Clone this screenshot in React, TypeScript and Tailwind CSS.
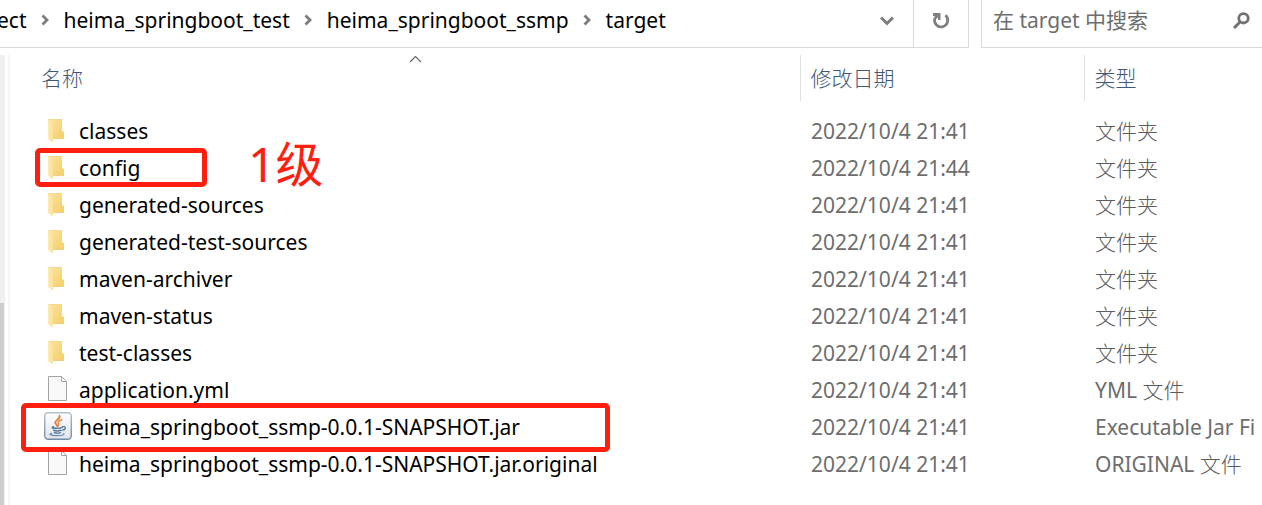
import type { ReactNode } from "react";

type Kind = "folder" | "file" | "jar";

interface Entry {
  name: string;
  date: string;
  type: string;
  kind: Kind;
  mark?: ReactNode;
}

const configMark = (
  <>
    <span className="pointer-events-none absolute -top-[2px] left-[25px] z-10 h-[39px] w-[172px] rounded-[5px] border-5 border-[#ff1e10]" />
    <span className="pointer-events-none absolute -top-3 left-[238px] z-10 text-[48px] leading-[52px] text-[#ff1e10]">
      1级
    </span>
  </>
);

const jarMark = (
  <span className="pointer-events-none absolute -top-[6px] left-[11px] z-10 h-[49px] w-[589px] rounded-[5px] border-5 border-[#ff1e10]" />
);

const entries: Entry[] = [
  { name: "classes", date: "2022/10/4 21:41", type: "文件夹", kind: "folder" },
  { name: "config", date: "2022/10/4 21:44", type: "文件夹", kind: "folder", mark: configMark },
  { name: "generated-sources", date: "2022/10/4 21:41", type: "文件夹", kind: "folder" },
  { name: "generated-test-sources", date: "2022/10/4 21:41", type: "文件夹", kind: "folder" },
  { name: "maven-archiver", date: "2022/10/4 21:41", type: "文件夹", kind: "folder" },
  { name: "maven-status", date: "2022/10/4 21:41", type: "文件夹", kind: "folder" },
  { name: "test-classes", date: "2022/10/4 21:41", type: "文件夹", kind: "folder" },
  { name: "application.yml", date: "2022/10/4 21:41", type: "YML 文件", kind: "file" },
  {
    name: "heima_springboot_ssmp-0.0.1-SNAPSHOT.jar",
    date: "2022/10/4 21:41",
    type: "Executable Jar Fi",
    kind: "jar",
    mark: jarMark,
  },
  {
    name: "heima_springboot_ssmp-0.0.1-SNAPSHOT.jar.original",
    date: "2022/10/4 21:41",
    type: "ORIGINAL 文件",
    kind: "file",
  },
];

const crumbs = ["ect", "heima_springboot_test", "heima_springboot_ssmp", "target"];

function FolderIcon() {
  return (
    <svg width="28" height="28" viewBox="0 0 28 28" aria-hidden="true">
      <defs>
        <linearGradient id="folderBack" x1="0" y1="0" x2="1" y2="1">
          <stop offset="0" stopColor="#fbe3a0" />
          <stop offset="1" stopColor="#f4cf68" />
        </linearGradient>
        <linearGradient id="folderFront" x1="0" y1="0" x2="1" y2="0">
          <stop offset="0" stopColor="#fdeaae" />
          <stop offset="1" stopColor="#fbe09a" />
        </linearGradient>
      </defs>
      <path d="M4 3H18V15L20 16V23H8L4 21Z" fill="url(#folderBack)" />
      <path d="M4 3H18V4H4Z" fill="#f3d88f" />
      <path d="M8 22H20V23H8Z" fill="#f0cf7c" />
      <path d="M4 3L9 6.500V26.500L4 23Z" fill="url(#folderFront)" />
    </svg>
  );
}

function FileIcon() {
  return (
    <svg width="28" height="28" viewBox="0 0 28 28" aria-hidden="true">
      <path d="M4.500 1.500H17.500L22.500 6.500V25.500H4.500Z" fill="#f8f9f8" stroke="#a2a5a3" />
      <path d="M17.500 1.500V6.500H22.500Z" fill="#ffffff" stroke="#a2a5a3" />
    </svg>
  );
}

function JarIcon() {
  return (
    <svg width="28" height="28" viewBox="0 0 28 28" aria-hidden="true">
      <defs>
        <linearGradient id="jarTile" x1="0" y1="0" x2="0" y2="1">
          <stop offset="0" stopColor="#ffffff" />
          <stop offset="1" stopColor="#dfe3ea" />
        </linearGradient>
        <linearGradient id="jarEdge" x1="0" y1="0" x2="0" y2="1">
          <stop offset="0" stopColor="#b0bfcd" />
          <stop offset="1" stopColor="#6f8ba6" />
        </linearGradient>
      </defs>
      <rect x="0.700" y="0.700" width="26.600" height="26.600" rx="3.500" fill="url(#jarTile)" stroke="url(#jarEdge)" strokeWidth="1.400" />
      <g fill="none" strokeLinecap="round">
        <path d="M15.500 3.800C17 7.200 10.400 8.200 11.200 10.800C11.500 12 13 12.600 13.300 14" stroke="#e8742a" strokeWidth="1.800" />
        <path d="M17.800 7.800C14.500 9 13.600 10 14.400 11.300C15 12.300 14.700 13.200 14 14" stroke="#ea8744" strokeWidth="1.500" />
        <path d="M9.600 14.800C6.500 16 9 16.400 13 16.300C15.500 16.200 17 16 18 15.600" stroke="#54779b" strokeWidth="1.500" />
        <path d="M18.500 14.700C22.500 13.800 22 17.500 18.700 18.200" stroke="#54779b" strokeWidth="1.300" />
        <path d="M9.800 18.300C11.800 19.100 15 19 17 18.300" stroke="#54779b" strokeWidth="1.600" />
        <path d="M10.600 20.500C12.300 21.300 14.800 21.200 16.500 20.600" stroke="#54779b" strokeWidth="1.400" />
        <path d="M7.800 21.300C3.500 22.300 7.500 23.700 13 23.600C18 23.500 21 22.700 19.700 21.600" stroke="#6b8aaa" strokeWidth="1.200" />
      </g>
    </svg>
  );
}

function EntryIcon({ kind }: { kind: Kind }) {
  if (kind === "folder") return <FolderIcon />;
  if (kind === "jar") return <JarIcon />;
  return <FileIcon />;
}

function CrumbArrow() {
  return (
    <svg className="mx-[13px] shrink-0" width="11" height="12" viewBox="0 0 11 12" aria-hidden="true">
      <path d="M2.500 1.500L7 6L2.500 10.500" fill="none" stroke="#7c7c7c" strokeWidth="2.800" />
    </svg>
  );
}

export default function App() {
  return (
    <div className="flex min-h-screen flex-col overflow-hidden bg-white font-['Noto_Sans','Noto_Sans_CJK_SC',sans-serif] text-[21px] leading-7 text-black">
      <header className="flex h-12 gap-3">
        <div className="flex min-w-0 flex-1 border-r border-b border-[#d9d9d9]">
          <nav aria-label="路径" className="-ml-[3px] flex min-w-0 flex-1 items-center pb-[7px] whitespace-nowrap">
            {crumbs.map((crumb, i) => (
              <div key={crumb} className="flex items-center">
                {i > 0 && <CrumbArrow />}
                <a href="#">{crumb}</a>
              </div>
            ))}
          </nav>
          <button type="button" aria-label="以前的位置" className="flex w-[53px] items-center justify-center pb-[5px]">
            <svg width="14" height="10" viewBox="0 0 14 10" aria-hidden="true">
              <path d="M1 1.500L7 7.500L13 1.500" fill="none" stroke="#7c7c7c" strokeWidth="3" />
            </svg>
          </button>
          <button
            type="button"
            aria-label="刷新"
            className="flex w-[55px] items-center justify-center border-l border-[#d9d9d9] pb-[5px]"
          >
            <svg width="18" height="18" viewBox="0 0 18 18" aria-hidden="true">
              <path d="M13.500 3.300A6.600 6.600 0 1 1 2.600 7.200C3 5.800 4 4.800 6 3.500" fill="none" stroke="#808080" strokeWidth="2.800" />
              <path d="M1 1H8.500V8H6V4H1Z" fill="#808080" />
            </svg>
          </button>
        </div>
        <label className="flex w-[281px] items-center border-b border-l border-[#d9d9d9] pr-3 pb-[7px] pl-[11px]">
          <input
            type="search"
            aria-label="在 target 中搜索"
            placeholder="在 target 中搜索"
            className="min-w-0 flex-1 outline-none placeholder:text-[#6d6d6d]"
          />
          <svg width="17" height="17" viewBox="0 0 17 17" aria-hidden="true">
            <circle cx="10.500" cy="6.300" r="4.700" fill="none" stroke="#707070" strokeWidth="2.800" />
            <path d="M7.200 9.800L1 16" stroke="#707070" strokeWidth="3" />
          </svg>
        </label>
      </header>

      <main className="flex flex-1 pt-[7px]">
        <div className="flex w-[5px] flex-col bg-[#f0f0f0] pt-[248px]">
          <div className="w-1 flex-1 bg-[#cdcdcd]" />
        </div>
        <div className="ml-[3px] w-[2px] bg-[#f5f5f5]" />
        <div className="min-w-0 flex-1">
          <table className="w-full table-fixed border-collapse text-left whitespace-nowrap">
            <colgroup>
              <col className="w-[790px]" />
              <col className="w-[284px]" />
              <col />
            </colgroup>
            <thead>
              <tr className="h-[46px] text-[#3f5878]">
                <th className="relative p-0 pl-[31px] font-light">
                  名称
                  <svg className="absolute top-0 left-[399px]" width="13" height="8" viewBox="0 0 13 8" aria-hidden="true">
                    <path d="M1 7L6.500 1.500L12 7" fill="none" stroke="#5f5f5f" strokeWidth="1.100" />
                  </svg>
                </th>
                <th className="border-l border-[#e0e0e0] p-0 pl-[10px] font-light">修改日期</th>
                <th className="border-l border-[#e0e0e0] p-0 pl-[10px] font-light">类型</th>
              </tr>
            </thead>
            <tbody className="leading-[31px] text-[#6d6d6d] before:block before:h-3">
              {entries.map((entry) => (
                <tr key={entry.name} className="h-[37px]">
                  <td className="relative p-0 pl-[34px]">
                    <div className="flex items-start gap-[7px] text-black">
                      <EntryIcon kind={entry.kind} />
                      <span>{entry.name}</span>
                    </div>
                    {entry.mark}
                  </td>
                  <td className="p-0 pl-[11px]">{entry.date}</td>
                  <td className="p-0 pl-[11px]">
                    {entry.type.split(/([\u4e00-\u9fff]+)/).map((part, i) => (
                      <span key={i} className={i % 2 ? "font-light text-[#5c5c5c]" : undefined}>
                        {part}
                      </span>
                    ))}
                  </td>
                </tr>
              ))}
            </tbody>
          </table>
        </div>
      </main>
    </div>
  );
}
